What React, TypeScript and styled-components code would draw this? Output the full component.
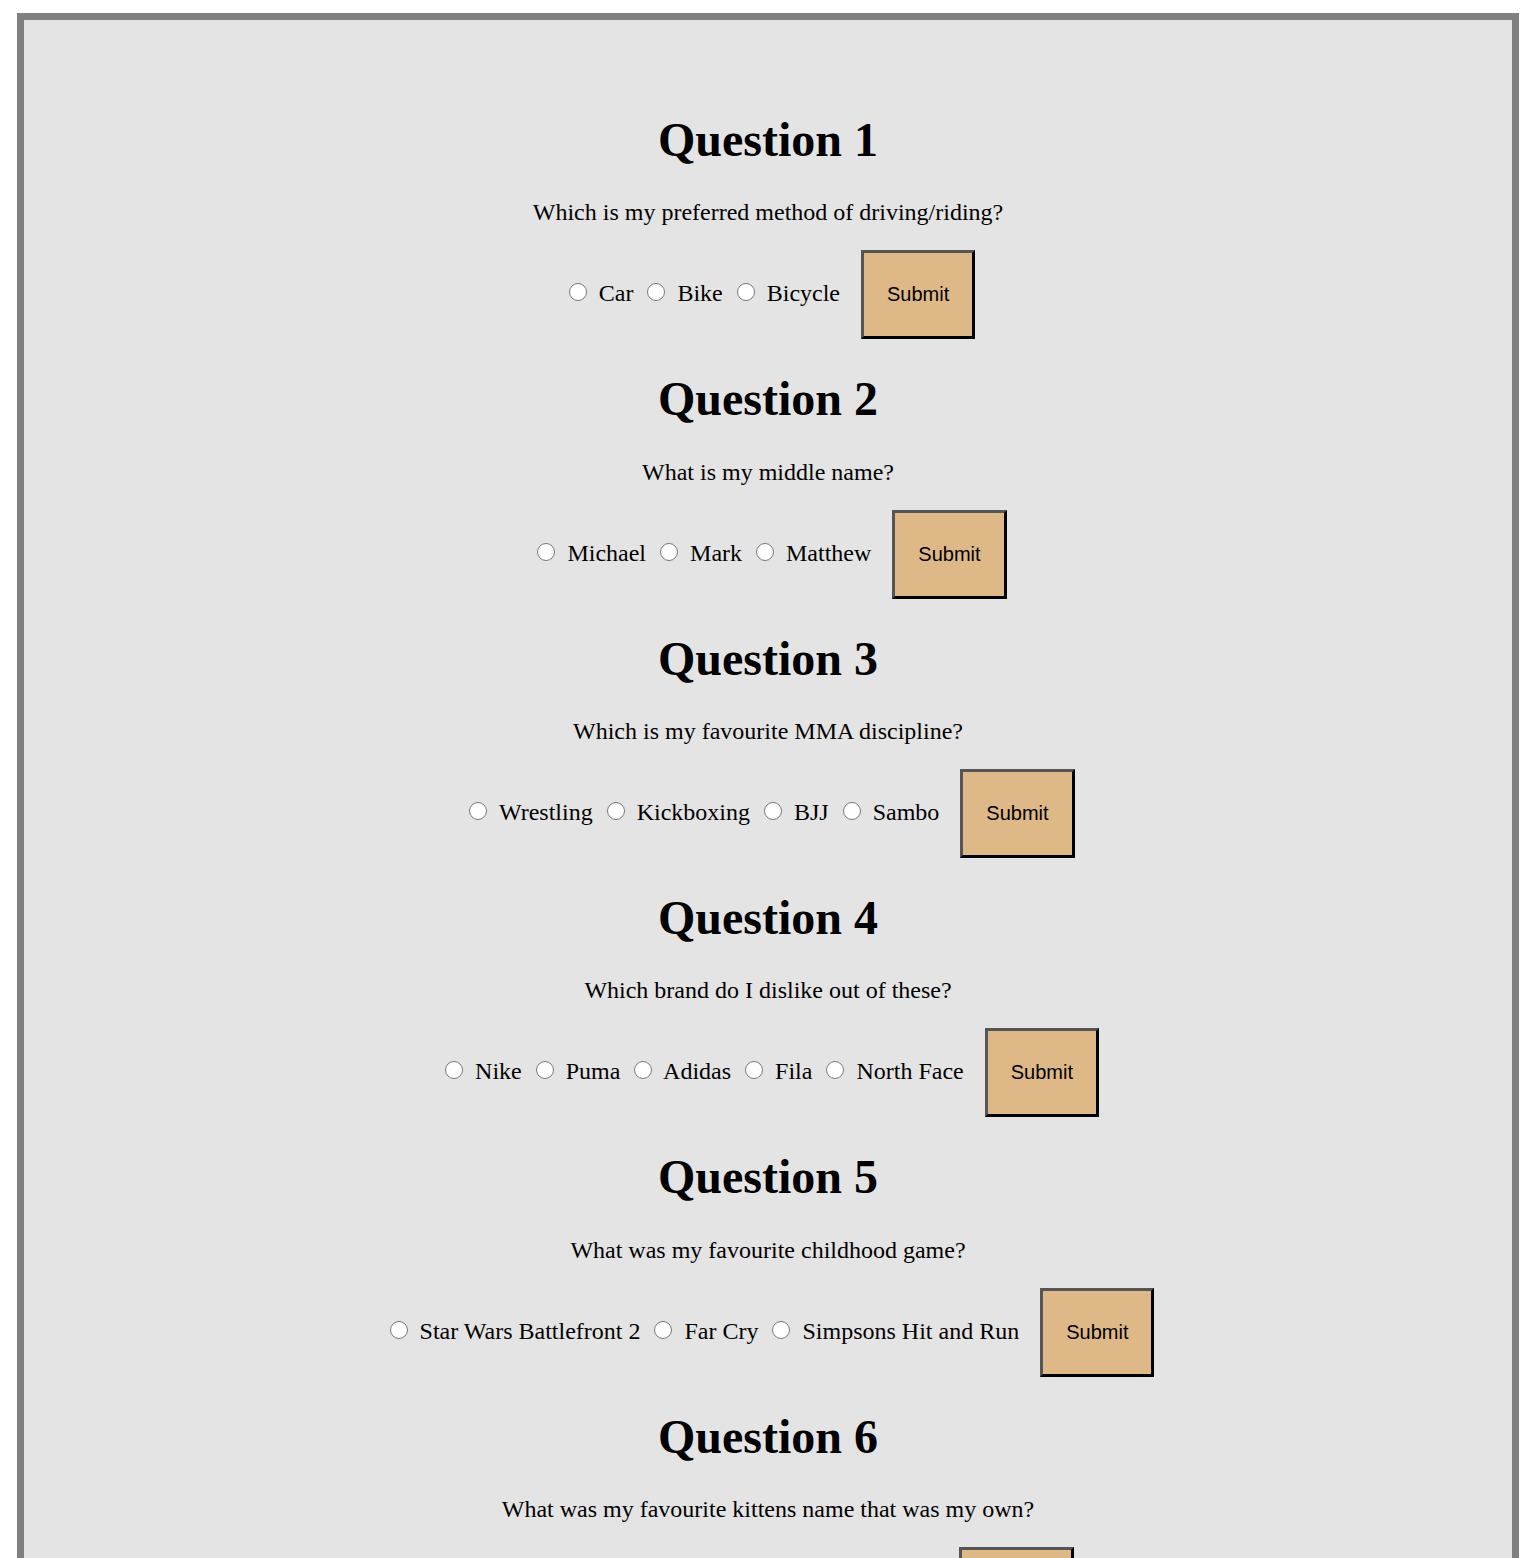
import React from 'react';
import styled, { createGlobalStyle } from 'styled-components';

interface Question {
  id: number;
  text: string;
  options: string[];
}

const questions: Question[] = [
  { id: 1, text: 'Which is my preferred method of driving/riding?', options: ['Car', 'Bike', 'Bicycle'] },
  { id: 2, text: 'What is my middle name?', options: ['Michael', 'Mark', 'Matthew'] },
  { id: 3, text: 'Which is my favourite MMA discipline?', options: ['Wrestling', 'Kickboxing', 'BJJ', 'Sambo'] },
  { id: 4, text: 'Which brand do I dislike out of these?', options: ['Nike', 'Puma', 'Adidas', 'Fila', 'North Face'] },
  { id: 5, text: 'What was my favourite childhood game?', options: ['Star Wars Battlefront 2', 'Far Cry', 'Simpsons Hit and Run'] },
  { id: 6, text: 'What was my favourite kittens name that was my own?', options: ['Tigger', 'Smokey', 'Oscar', 'Mr Mittens'] },
];

const GlobalStyle = createGlobalStyle`
  body {
    margin: 8px;
    background: #ffffff;
    font-family: "Liberation Serif", "Times New Roman", serif;
  }
`;

const QuizContainer = styled.main`
  width: 1502px;
  box-sizing: border-box;
  margin: 5px 0 0 9px;
  padding: 60px 0 40px;
  background: #e4e4e4;
  border: 7px solid #808080;
  text-align: center;
  color: #000;
`;

const QuestionBlock = styled.section``;

const Heading = styled.h1`
  font-size: 48px;
  font-weight: bold;
  margin: 0.67em 0;
`;

const Prompt = styled.p`
  font-size: 24px;
  margin: 24px 0;
`;

const OptionsRow = styled.form`
  font-size: 24px;
  margin: 0;
`;

const Radio = styled.input`
  width: 18px;
  height: 18px;
  margin: 0 6px 0 8px;
  vertical-align: baseline;
`;

const SubmitButton = styled.button`
  font-family: "Liberation Sans", Arial, sans-serif;
  font-size: 20px;
  color: #000;
  background: #deb887;
  padding: 30px 23px;
  margin-left: 15px;
  border-style: solid;
  border-width: 3px;
  border-color: #555555 #000000 #000000 #555555;
  cursor: pointer;
`;

const App: React.FC = () => {
  return (
    <>
      <GlobalStyle />
      <QuizContainer>
        {questions.map((q) => (
          <QuestionBlock key={q.id}>
            <Heading>Question {q.id}</Heading>
            <Prompt>{q.text}</Prompt>
            <OptionsRow onSubmit={(e) => e.preventDefault()}>
              {q.options.map((opt, i) => (
                <React.Fragment key={opt}>
                  <Radio type="radio" name={`q${q.id}`} id={`q${q.id}-${i}`} value={opt} />{' '}
                  <label htmlFor={`q${q.id}-${i}`}>{opt}</label>{' '}
                </React.Fragment>
              ))}
              <SubmitButton type="submit">Submit</SubmitButton>
            </OptionsRow>
          </QuestionBlock>
        ))}
      </QuizContainer>
    </>
  );
};

export default App;
